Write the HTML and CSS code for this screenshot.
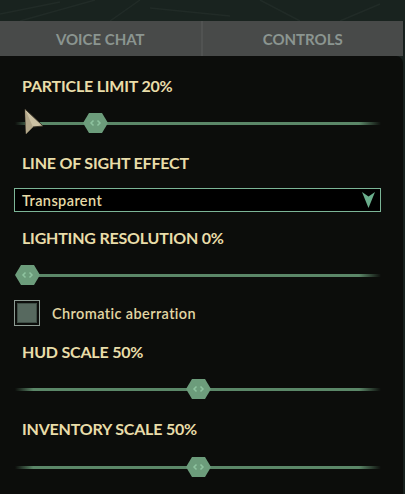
FILE: index.html
```html
<!DOCTYPE html>
<html lang="en">
<head>
    <meta charset="UTF-8">
    <meta name="viewport" content="width=device-width, initial-scale=1.0">
    <title>Settings</title>
    <link rel="stylesheet" href="styles.css">
</head>
<body>
    <div class="backdrop">
        <svg class="backdrop-lines" width="405" height="21" viewBox="0 0 405 21">
            <path d="M0 14 L60 2 M20 21 L95 0 M110 21 L140 0 M150 8 L230 16 M260 0 L300 21 M340 21 L380 4" stroke="#212b27" stroke-width="1.5" fill="none"/>
        </svg>
    </div>

    <div class="tabs">
        <div class="tab">VOICE CHAT</div>
        <div class="tab">CONTROLS</div>
    </div>

    <div class="panel">
        <div class="setting">
            <div class="label">PARTICLE LIMIT 20%</div>
            <div class="slider" style="--value: 0.2">
                <svg class="thumb" width="25" height="20" viewBox="0 0 25 20"><polygon points="6,0 19,0 25,10 19,20 6,20 0,10" fill="#6c9c7b"/><path d="M10.5 7.5 L8 10 L10.5 12.5 M14.5 7.5 L17 10 L14.5 12.5" stroke="#8fc4a0" stroke-width="1.5" fill="none"/></svg>
            </div>
        </div>

        <div class="setting spaced">
            <div class="label">LINE OF SIGHT EFFECT</div>
            <div class="dropdown">
                <span>Transparent</span>
                <svg width="13" height="16" viewBox="0 0 13 16"><polygon points="0,0 6.5,4.5 13,0 6.5,16" fill="#6aae8c"/></svg>
            </div>
        </div>

        <div class="setting">
            <div class="label">LIGHTING RESOLUTION 0%</div>
            <div class="slider" style="--value: 0">
                <svg class="thumb" width="25" height="20" viewBox="0 0 25 20"><polygon points="6,0 19,0 25,10 19,20 6,20 0,10" fill="#6c9c7b"/><path d="M10.5 7.5 L8 10 L10.5 12.5 M14.5 7.5 L17 10 L14.5 12.5" stroke="#8fc4a0" stroke-width="1.5" fill="none"/></svg>
            </div>
        </div>

        <label class="checkbox">
            <span class="box"><span class="fill"></span></span>
            <span>Chromatic aberration</span>
        </label>

        <div class="setting">
            <div class="label">HUD SCALE 50%</div>
            <div class="slider" style="--value: 0.5">
                <svg class="thumb" width="25" height="20" viewBox="0 0 25 20"><polygon points="6,0 19,0 25,10 19,20 6,20 0,10" fill="#6c9c7b"/><path d="M10.5 7.5 L8 10 L10.5 12.5 M14.5 7.5 L17 10 L14.5 12.5" stroke="#8fc4a0" stroke-width="1.5" fill="none"/></svg>
            </div>
        </div>

        <div class="setting spaced last">
            <div class="label">INVENTORY SCALE 50%</div>
            <div class="slider" style="--value: 0.5">
                <svg class="thumb" width="25" height="20" viewBox="0 0 25 20"><polygon points="6,0 19,0 25,10 19,20 6,20 0,10" fill="#6c9c7b"/><path d="M10.5 7.5 L8 10 L10.5 12.5 M14.5 7.5 L17 10 L14.5 12.5" stroke="#8fc4a0" stroke-width="1.5" fill="none"/></svg>
            </div>
        </div>

        <svg class="cursor" width="22" height="28" viewBox="0 0 22 28">
            <polygon points="2,1 20,18 10,19 3,26" fill="#cdc2a4" stroke="#3a3428" stroke-width="1"/>
            <polygon points="2,1 10,19 3,26" fill="#b3a78a"/>
        </svg>
    </div>
</body>
</html>
```

FILE: styles.css
```css
body {
    margin: 0;
    background-color: #17201d;
    font-family: Lato, "Open Sans", sans-serif;
    width: 405px;
    height: 494px;
    overflow: hidden;
}
.backdrop {
    height: 21px;
    background-color: #19231f;
}
.backdrop-lines {
    display: block;
}
.tabs {
    display: flex;
    width: 403px;
    height: 35px;
    background-color: #484a49;
}
.tab {
    flex: 1;
    display: flex;
    align-items: center;
    justify-content: center;
    color: #8b9590;
    font-size: 15px;
    font-weight: bold;
}
.tab + .tab {
    border-left: 2px solid #515352;
}
.panel {
    position: relative;
    width: 403px;
    height: 438px;
    box-sizing: border-box;
    padding: 20px 0 0 0;
    background-color: #0c0d0b;
    border-top-right-radius: 7px;
    display: flex;
    flex-direction: column;
    gap: 16px;
}
.setting {
    display: flex;
    flex-direction: column;
    gap: 15px;
}
.spaced {
    margin-top: 2px;
}
.last {
    gap: 16px;
}
.label {
    padding-left: 22px;
    height: 20px;
    line-height: 20px;
    font-size: 16px;
    font-weight: bold;
    letter-spacing: -0.2px;
    color: #e9dda9;
}
.slider {
    position: relative;
    margin: 0 22px 0 15px;
    height: 24px;
}
.slider::before {
    content: "";
    position: absolute;
    left: 0;
    right: 0;
    top: 11px;
    height: 3px;
    background: linear-gradient(to right, rgba(93, 138, 107, 0), #5b8768 5%, #5b8768 94%, rgba(93, 138, 107, 0));
}
.thumb {
    position: absolute;
    top: 2px;
    left: calc(var(--value) * (100% - 25px));
}
.dropdown {
    margin: 0 22px 0 14px;
    height: 24px;
    box-sizing: border-box;
    border: 1px solid #7cb597;
    background-color: #000;
    display: flex;
    align-items: center;
    justify-content: space-between;
    padding: 0 5px 0 7px;
    color: #e6daa6;
    font-size: 14.5px;
    font-weight: 600;
    letter-spacing: 0.4px;
}
.checkbox {
    display: flex;
    align-items: center;
    gap: 12px;
    margin-left: 14px;
    margin-top: -3px;
    color: #e2d6a3;
    font-size: 14.5px;
    font-weight: 600;
    letter-spacing: 0.4px;
}
.box {
    width: 26px;
    height: 26px;
    box-sizing: border-box;
    border: 1px solid #8d9b93;
    padding: 2px;
    background-color: #0c0d0b;
}
.fill {
    display: block;
    width: 100%;
    height: 100%;
    box-sizing: border-box;
    border: 1px solid #3f4e46;
    background-color: #57695f;
}
.cursor {
    position: absolute;
    left: 23px;
    top: 52px;
}
```
